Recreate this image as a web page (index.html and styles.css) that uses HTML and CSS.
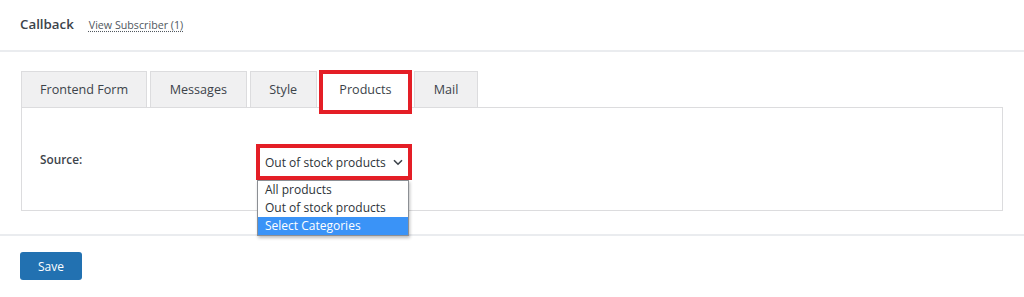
FILE: index.html
```html
<!DOCTYPE html>
<html lang="en">
<head>
    <meta charset="UTF-8" />
    <meta name="viewport" content="width=device-width, initial-scale=1" />
    <title>Callback</title>
    <link rel="stylesheet" href="styles.css">
</head>
<body>
    <header class="page-head">
        <h1>Callback</h1>
        <a class="sub-link" href="#">View Subscriber (1)</a>
    </header>

    <main class="content">
        <nav class="tabs">
            <a class="tab" href="#">Frontend Form</a>
            <a class="tab" href="#">Messages</a>
            <a class="tab" href="#">Style</a>
            <a class="tab active" href="#">Products<span class="mark mark-tab"></span></a>
            <a class="tab" href="#">Mail</a>
        </nav>

        <section class="panel">
            <div class="field">
                <label class="field-label">Source:</label>
                <div class="select-wrap">
                    <div class="select">
                        <span>Out of stock products</span>
                        <svg class="chev" width="10" height="7" viewBox="0 0 10 7"><path d="M1 1.2 L5 5.2 L9 1.2" fill="none" stroke="#3c434a" stroke-width="1.6"/></svg>
                    </div>
                    <span class="mark mark-select"></span>
                    <ul class="options">
                        <li>All products</li>
                        <li>Out of stock products</li>
                        <li class="hl">Select Categories</li>
                    </ul>
                </div>
            </div>
        </section>
    </main>

    <footer class="page-foot">
        <button class="btn-save">Save</button>
    </footer>
</body>
</html>
```

FILE: styles.css
```css
body {
    margin: 0;
    background: #fff;
    color: #3c434a;
    font-family: "Open Sans", "Noto Sans", sans-serif;
    font-size: 13px;
}
.page-head {
    display: flex;
    align-items: baseline;
    gap: 15px;
    height: 52px;
    padding: 0 20px;
    box-sizing: border-box;
    padding-top: 15px;
    border-bottom: 2px solid #eaecef;
}
.page-head h1 {
    margin: 0;
    font-size: 13.3px;
    font-weight: 600;
    color: #3c434a;
}
.sub-link {
    font-size: 10.7px;
    color: #50575e;
    text-decoration: underline dotted;
    text-underline-offset: 2px;
}
.content {
    padding: 19px 20px 0 21px;
}
.tabs {
    display: flex;
    gap: 3px;
}
.tab {
    position: relative;
    display: block;
    height: 35px;
    line-height: 35px;
    padding: 0 18.6px;
    background: #f0f0f1;
    border: 1px solid #dcdcde;
    border-bottom: none;
    color: #3c434a;
    text-decoration: none;
    font-size: 12.6px;
}
.tab:first-child {
    padding: 0 18px;
}
.tab.active {
    background: #fff;
    margin-bottom: -1px;
    height: 36px;
    z-index: 1;
}
.mark {
    position: absolute;
    border: 4px solid #e41e26;
    pointer-events: none;
}
.mark-tab {
    top: -2px;
    left: -2px;
    right: -2px;
    bottom: -6px;
}
.panel {
    height: 102px;
    border: 1px solid #dcdcde;
    margin-right: 1px;
}
.field {
    display: flex;
    align-items: flex-start;
    padding: 40px 0 0 18px;
}
.field-label {
    width: 217px;
    font-weight: 600;
    font-size: 11.8px;
    margin-top: 3px;
}
.select-wrap {
    position: relative;
}
.select {
    display: flex;
    align-items: center;
    gap: 7px;
    height: 28px;
    padding: 0 6px 0 8px;
    color: #2c3338;
    font-size: 12px;
}
.mark-select {
    top: -4px;
    left: -1px;
    right: -3px;
    bottom: -4px;
}
.options {
    position: absolute;
    top: 32px;
    left: 0;
    width: 150px;
    margin: 0;
    padding: 0;
    list-style: none;
    background: #fff;
    border: 1px solid #8c8f94;
    box-shadow: 1px 2px 3px rgba(0,0,0,0.25);
    z-index: 2;
}
.options li {
    height: 18px;
    line-height: 18px;
    padding: 0 7px;
    font-size: 12px;
    color: #2c3338;
}
.options li.hl {
    background: #3a93f7;
    color: #fff;
}
.page-foot {
    margin-top: 23px;
    border-top: 2px solid #eaecef;
    padding: 16px 20px;
}
.btn-save {
    width: 62px;
    height: 28px;
    border: none;
    border-radius: 3px;
    background: #2271b1;
    color: #fff;
    font-family: inherit;
    font-size: 12px;
    cursor: pointer;
}
```
